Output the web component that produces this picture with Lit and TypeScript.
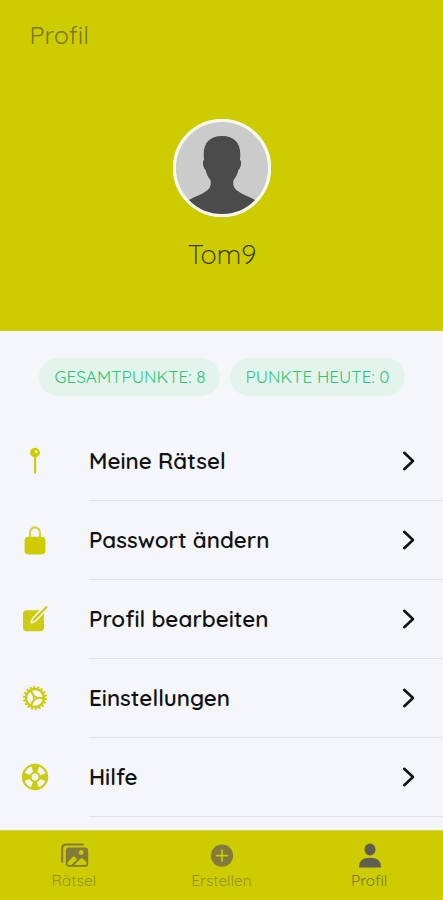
import { LitElement, html, css, svg } from "lit";
import { customElement } from "lit/decorators.js";

const pin = svg`<svg width="28" height="30" viewBox="0 0 28 30"><path d="M13 10h2.200v17q-1.100 2-2.200 0z" fill="#cccc16"/><circle cx="14" cy="6.600" r="4.900" fill="#cccc00"/><circle cx="15.200" cy="5.400" r="1.500" fill="#f1f2c4"/></svg>`;
const lock = svg`<svg width="28" height="30" viewBox="0 0 28 30"><path d="M9 12.500V8a5 5.600 0 0 1 10 0v4.500" fill="none" stroke="#d2d43c" stroke-width="2.200"/><rect x="3.600" y="11.800" width="20.800" height="17.600" rx="4" fill="#cccc00"/></svg>`;
const edit = svg`<svg width="28" height="30" viewBox="0 0 28 30"><rect x="2" y="6.200" width="21" height="21" rx="3.600" fill="#cccc10"/><path d="M10.800 18l2.200-4L24.800 2.300q2-.6 1.500 1.500L14.600 16z" fill="#cccc10" stroke="#f4f6fa" stroke-width="3" stroke-linejoin="round"/><path d="M10.800 18l2.200-4L24.800 2.300q2-.6 1.500 1.500L14.600 16z" fill="#cccc10"/></svg>`;
const gear = svg`<svg width="28" height="30" viewBox="0 0 28 30" fill="none" stroke="#cccc10"><circle cx="14" cy="15" r="10.900" stroke-width="2.200" stroke-dasharray="2 1.805"/><circle cx="14" cy="15" r="9" stroke-width="2.600"/><circle cx="14" cy="15" r="1.600" stroke-width="1.600"/><path d="M16 15h7M13 13.200L9.600 7.300M13 16.800l-3.400 5.900" stroke-width="2.200"/></svg>`;
const buoy = svg`<svg width="28" height="30" viewBox="0 0 28 30"><circle cx="14" cy="15" r="13.200" fill="#cccc10"/><circle cx="14" cy="15" r="8.300" fill="none" stroke="#f4f6fa" stroke-width="5.400" stroke-dasharray="7 6.038" stroke-dashoffset="-3.019"/><circle cx="14" cy="15" r="3.400" fill="#f4f6fa"/></svg>`;
const chevron = svg`<svg width="14" height="22" viewBox="0 0 14 22"><path d="M2.200 2.800l8.800 8.200-8.800 8.200" fill="none" stroke="#111" stroke-width="2.600" stroke-linecap="round" stroke-linejoin="round"/></svg>`;
const images = svg`<svg width="30" height="26" viewBox="0 0 30 26"><path d="M2.200 20V6.200Q2.200 2.400 6 2.400h17" fill="none" stroke="#827b3b" stroke-width="2" stroke-linecap="round"/><rect x="5.800" y="5.400" width="22.400" height="19.400" rx="3.400" fill="#827b3b"/><circle cx="21.200" cy="10.400" r="2.300" fill="#cccc00"/><path d="M7.400 20.400l5.400-5.600q1-.8 2 0l2.400 2.500-5.800 5.700H9q-1.600 0-1.600-1.600zM14 23l6.700-6.400q1-.7 2 0l3.800 3.600v1.200q0 1.600-1.600 1.600z" fill="#cccc00"/></svg>`;
const plus = svg`<svg width="30" height="26" viewBox="0 0 30 26"><circle cx="15" cy="13.600" r="11.100" fill="#827b3b"/><path d="M15 8.300v10.600M9.700 13.600h10.600" stroke="#cccc00" stroke-width="1.700" stroke-linecap="round"/></svg>`;
const person = svg`<svg width="30" height="26" viewBox="0 0 30 26" fill="#625d52"><ellipse cx="15" cy="7.600" rx="5.500" ry="6"/><path d="M4 25q0-9.200 11-9.200T26 25q0 .6-.8.600H4.800Q4 25.600 4 25z"/></svg>`;

const rows = [
  { icon: pin, label: "Meine Rätsel" },
  { icon: lock, label: "Passwort ändern" },
  { icon: edit, label: "Profil bearbeiten" },
  { icon: gear, label: "Einstellungen" },
  { icon: buoy, label: "Hilfe" },
];

@customElement("app-root")
export class AppRoot extends LitElement {
  static styles = css`
    :host { display: flex; flex-direction: column; height: 900px; overflow: hidden; background: #f4f6fa; font-family: Quicksand, Lato, sans-serif; color: #111; }
    * { box-sizing: border-box; }
    svg { display: block; flex: none; }
    span { white-space: nowrap; }
    header { flex: none; height: 331px; background: #cccc00; display: flex; flex-direction: column; align-items: center; }
    .title { align-self: flex-start; margin: 20px 0 0 29.5px; font-size: 25.2px; line-height: 30px; font-weight: 400; color: #7e7728; }
    .avatar { margin-top: 68px; }
    .name { margin: 20px 0 0 1px; font-size: 27px; line-height: 32px; font-weight: 300; color: #3a3609; -webkit-text-stroke: 0.2px #3a3609; }
    .chips { flex: none; display: flex; gap: 10px; margin: 27px 0 0 39px; }
    .chip { height: 38px; border-radius: 19px; background: #e2f4ec; color: #2fc474; font-size: 17.2px; line-height: 37px; text-align: center; font-weight: 400; }
    .total { width: 181px; padding-left: 1px; }
    .today { width: 175px; }
    .list { flex: 1; min-height: 0; margin-top: 26px; overflow: hidden; }
    .row { display: flex; height: 79px; padding-left: 21px; }
    .row > svg { margin-top: 24px; }
    .cell { flex: 1; margin-left: 40px; border-bottom: 1px solid #e0e2e5; display: flex; align-items: center; justify-content: space-between; padding-right: 27px; }
    .label { font-size: 22.4px; line-height: 28px; font-weight: 600; }
    nav { flex: none; height: 70px; background: #cccc00; border-top: 1px solid #d6d650; display: grid; grid-template-columns: repeat(3, 1fr); }
    .tab { display: flex; flex-direction: column; align-items: center; padding-top: 11px; color: #969028; font-size: 15.4px; line-height: 18px; gap: 4px; }
    .tab svg { transform: translateX(1px); }
    .active { color: #7b7530; }
  `;

  render() {
    return html`
      <header>
        <span class="title">Profil</span>
        <svg class="avatar" width="100" height="100" viewBox="0 0 100 100">
          <defs><clipPath id="face"><circle cx="50" cy="50" r="47" /></clipPath></defs>
          <circle cx="50" cy="50" r="49" fill="#f7f7ee" />
          <circle cx="50" cy="50" r="46.300" fill="#cbcbcb" />
          <path clip-path="url(#face)" fill="#4b4b4b" d="M50 18c12 0 18.500 7 18.300 18.500l-.3 5.500c2 1 1 8-1.600 10-1 5-2.700 7-5 10.500-.6 5 .5 7.500 3.600 10 5 4 12 6 19 10L76 92 50 98 24 92l-8-9.500c7-4 14-6 19-10 3.100-2.500 4.200-5 3.600-10-2.300-3.500-4-5.500-5-10.500-2.600-2-3.600-9-1.600-10l-.3-5.500C31.500 25 38 18 50 18z" />
          <circle cx="50" cy="50" r="47.600" fill="none" stroke="#f7f7ee" stroke-width="3" />
        </svg>
        <span class="name">Tom9</span>
      </header>
      <div class="chips">
        <span class="chip total">GESAMTPUNKTE: 8</span>
        <span class="chip today">PUNKTE HEUTE: 0</span>
      </div>
      <div class="list">
        ${rows.map((r) => html`<div class="row">${r.icon}<div class="cell"><span class="label">${r.label}</span>${chevron}</div></div>`)}
      </div>
      <nav>
        <div class="tab">${images}<span>Rätsel</span></div>
        <div class="tab">${plus}<span>Erstellen</span></div>
        <div class="tab active">${person}<span>Profil</span></div>
      </nav>
    `;
  }
}
